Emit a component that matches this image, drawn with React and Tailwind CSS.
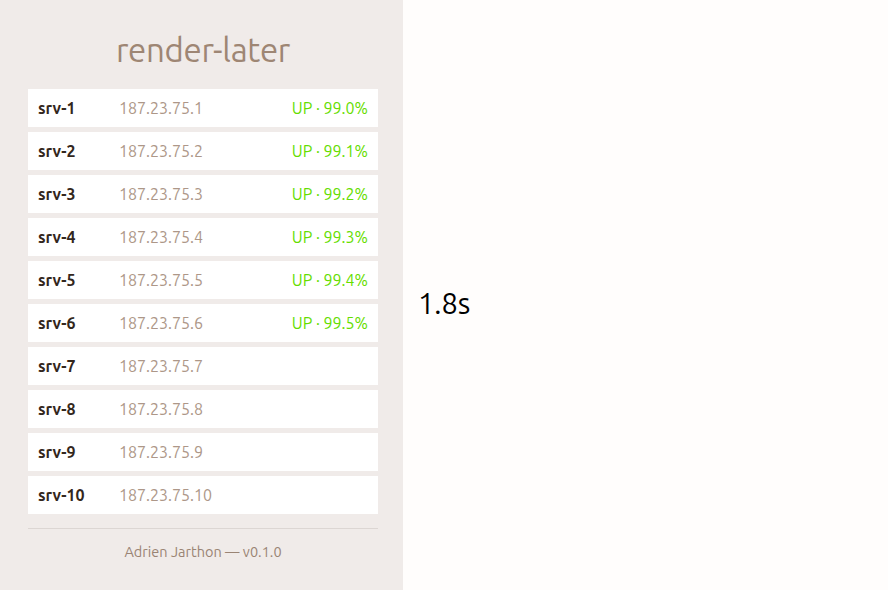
import React from 'react';

const servers = Array.from({ length: 10 }, (_, i) => ({
  name: `srv-${i + 1}`,
  ip: `187.23.75.${i + 1}`,
  status: i < 6 ? `UP · ${(99 + i / 10).toFixed(1)}%` : null,
}));

export default function App() {
  return (
    <div
      className="flex w-[888px] h-[590px] bg-[#fffdfc]"
      style={{ fontFamily: "Ubuntu, 'Noto Sans', 'Open Sans', sans-serif" }}
    >
      <aside className="w-[403px] h-full bg-[#f0ebe9] pl-[28px] pr-[25px] flex flex-col">
        <h1 className="text-center text-[33px] text-[#9e8674] pt-[30px] pb-[19px] leading-[40px] tracking-[-0.3px]">
          render-later
        </h1>
        <ul className="flex flex-col gap-[5px]">
          {servers.map((s) => (
            <li
              key={s.name}
              className="flex items-center h-[38px] bg-white px-[10px] text-[16px]"
            >
              <span className="w-[81px] font-bold text-[#33271c]">{s.name}</span>
              <span className="flex-1 text-[#ad9788]">{s.ip}</span>
              {s.status && <span className="text-[#66dd00]">{s.status}</span>}
            </li>
          ))}
        </ul>
        <div className="mt-[14px] border-t border-[#dcd6d3]" />
        <p className="text-center text-[14.5px] text-[#9a8474] pt-[12px]">
          Adrien Jarthon — v0.1.0
        </p>
      </aside>
      <main className="flex-1 flex items-center pl-[15px] pt-[18px]">
        <span className="text-[29px] text-black">1.8s</span>
      </main>
    </div>
  );
}
